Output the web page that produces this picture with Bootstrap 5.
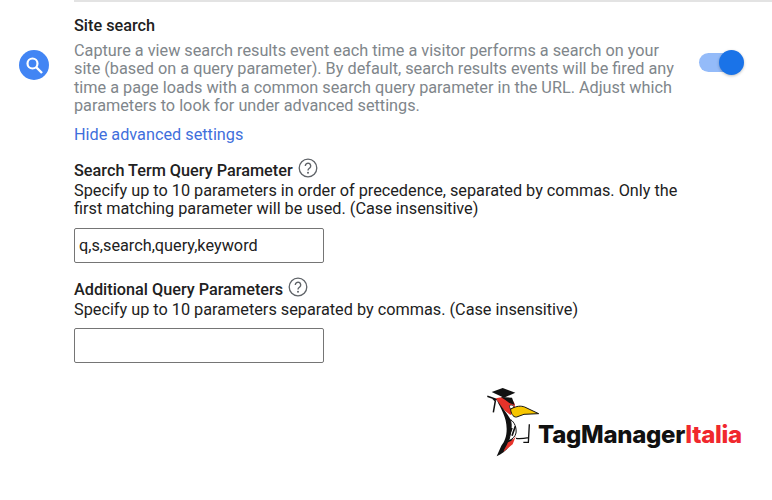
<!DOCTYPE html>
<html lang="en">
<head>
    <meta charset="UTF-8">
    <title>Site search</title>
    <link href="https://cdn.jsdelivr.net/npm/bootstrap@5.3.0/dist/css/bootstrap.min.css" rel="stylesheet">
    <style>
        html, body { height: 500px; overflow: hidden; }
        body { font-family: Roboto, sans-serif; font-size: 16.25px; color: #212121; background: #fff; }
        .top-rule { height: 2px; margin-left: 74px; background: #e3e3e3; }
        .search-row { padding-top: 15px; }
        .icon-cell { width: 74px; padding-left: 19px; padding-top: 33px; flex: none; }
        .round-icon { width: 30px; height: 30px; border-radius: 50%; background: #4285f4; }
        .body-cell { width: 625px; flex: none; }
        .row-title { font-weight: 500; line-height: 18px; margin-bottom: 7px; }
        .row-desc { color: #80868b; line-height: 18.3px; width: 608px; }
        .adv-link { display: block; color: #3f6fdc; text-decoration: none; line-height: 18px; margin-top: 11px; margin-bottom: 14px; }
        .field-label { font-weight: 500; line-height: 22px; }
        .field-label-next { margin-top: 14px; }
        .field-help { line-height: 18px; width: 608px; }
        .help-mark { width: 20px; height: 20px; margin-left: 1px; vertical-align: -2px; }
        .field-box { width: 250px; height: 35px; margin-top: 10px; border: 1px solid #757575; border-radius: 2px; padding: 0 4px; color: #212121; font-size: 16.25px; background: #fff; display: block; }
        .field-box-next { margin-top: 9px; }
        .switch-cell { padding-top: 34px; }
        .switch-track { width: 42px; height: 19px; border-radius: 10px; background: #94bbf9; position: relative; margin-top: 2px; }
        .switch-knob { position: absolute; right: -3px; top: -3px; width: 25px; height: 25px; border-radius: 50%; background: #1a73e8; box-shadow: 0 1px 3px rgba(0,0,0,.25); }
        .logo-row { padding-left: 480px; margin-top: 20px; }
        .logo-mark { flex: none; }
        .logo-text { font-family: Inter, sans-serif; font-weight: 800; font-size: 24px; letter-spacing: -.3px; color: #111; line-height: 26px; padding-top: 39px; margin-left: -2px; }
        .logo-text span { color: #f0282d; }
    </style>
</head>
<body>
    <div class="top-rule"></div>

    <div class="d-flex search-row">
        <div class="icon-cell">
            <div class="round-icon">
                <svg class="d-block" width="30" height="30" viewBox="0 0 30 30"><circle cx="13.5" cy="13.5" r="5" fill="none" stroke="#fff" stroke-width="2.2"/><path d="M17 17l6 6" stroke="#fff" stroke-width="2.4"/></svg>
            </div>
        </div>
        <div class="body-cell">
            <div class="row-title">Site search</div>
            <div class="row-desc">Capture a view search results event each time a visitor performs a search on your site (based on a query parameter). By default, search results events will be fired any time a page loads with a common search query parameter in the URL. Adjust which parameters to look for under advanced settings.</div>
            <a class="adv-link" href="#">Hide advanced settings</a>

            <div class="field-label">Search Term Query Parameter
                <svg class="help-mark" viewBox="0 0 20 20"><circle cx="10" cy="10" r="8.8" fill="none" stroke="#5f6368" stroke-width="1.3"/><path d="M7.3 7.9a2.7 2.7 0 1 1 4.4 2.1c-.9.7-1.7 1.1-1.7 2.5" fill="none" stroke="#5f6368" stroke-width="1.4"/><circle cx="10" cy="14.8" r="1" fill="#5f6368"/></svg>
            </div>
            <div class="field-help">Specify up to 10 parameters in order of precedence, separated by commas. Only the first matching parameter will be used. (Case insensitive)</div>
            <input class="field-box" type="text" value="q,s,search,query,keyword">

            <div class="field-label field-label-next">Additional Query Parameters
                <svg class="help-mark" viewBox="0 0 20 20"><circle cx="10" cy="10" r="8.8" fill="none" stroke="#5f6368" stroke-width="1.3"/><path d="M7.3 7.9a2.7 2.7 0 1 1 4.4 2.1c-.9.7-1.7 1.1-1.7 2.5" fill="none" stroke="#5f6368" stroke-width="1.4"/><circle cx="10" cy="14.8" r="1" fill="#5f6368"/></svg>
            </div>
            <div class="field-help">Specify up to 10 parameters separated by commas. (Case insensitive)</div>
            <input class="field-box field-box-next" type="text">
        </div>
        <div class="switch-cell">
            <div class="switch-track"><div class="switch-knob"></div></div>
        </div>
    </div>

    <div class="d-flex logo-row">
        <svg class="logo-mark" width="60" height="80" viewBox="0 0 180 240">
            <path d="M35 27L68 15l38 14-34 15z" fill="#111"/>
            <path d="M22 40l30 10M38 46l8 8-6 34" stroke="#111" stroke-width="4.5" fill="none"/>
            <path d="M48 46c12-4 34-4 48 6 8 6 10 14 8 22l-12 22c-12-8-30-20-44-50z" fill="#e6332a"/>
            <path d="M62 42l34 2 8 22-16-6c-10-8-16-12-26-18z" fill="#111"/>
            <path d="M88 68c5-3 11-2 13 2 1 4-5 9-11 7z" fill="#fff" stroke="#111" stroke-width="2"/>
            <path d="M92 78c20-10 30-10 42-6l42 20-44 2-22 8c-12 2-18-14-18-24z" fill="#f7c600" stroke="#111" stroke-width="3"/>
            <path d="M50 50c16 24 34 42 46 68 10 26 6 50-8 72-10 14-24 24-38 30l14-32c10-12 16-28 16-50 0-36-16-58-30-88z" fill="#111"/>
            <path d="M92 110c12 8 18 24 16 40-2 10-10 18-22 24 6-20 10-42 6-64z" fill="#fff" stroke="#111" stroke-width="3"/>
            <path d="M96 135l-8 20M106 130l-10 28" stroke="#111" stroke-width="5"/>
            <path d="M84 178c10-4 20-12 24-20l-10 26-28 22c4-10 10-18 14-28z" fill="#e6332a"/>
            <path d="M108 166c12 2 26 0 38-2M148 124l-3 56M130 178h16" stroke="#111" stroke-width="4" fill="none"/>
        </svg>
        <div class="logo-text">TagManager<span>Italia</span></div>
    </div>

    <script src="https://cdn.jsdelivr.net/npm/bootstrap@5.3.0/dist/js/bootstrap.bundle.min.js"></script>
</body>
</html>
